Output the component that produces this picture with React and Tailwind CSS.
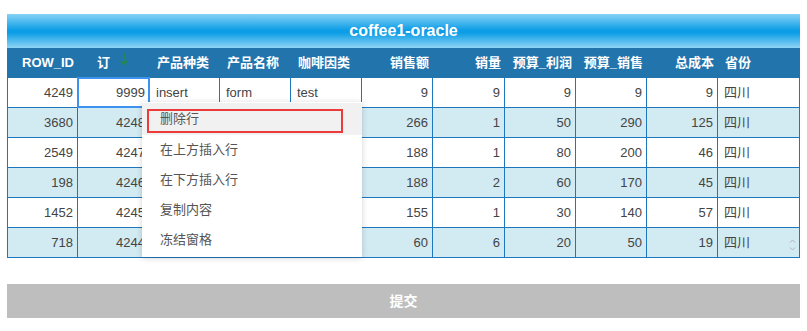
const cols = [
  { key: 'ROW_ID', w: 'w-[70px]', align: 'right' },
  { key: '订', w: 'w-[72px]', align: 'right' },
  { key: '产品种类', w: 'w-[70px]', align: 'left' },
  { key: '产品名称', w: 'w-[71px]', align: 'left' },
  { key: '咖啡因类', w: 'w-[71px]', align: 'left' },
  { key: '销售额', w: 'w-[71px]', align: 'right' },
  { key: '销量', w: 'w-[72px]', align: 'right' },
  { key: '预算_利润', w: 'w-[71px]', align: 'right' },
  { key: '预算_销售', w: 'w-[71px]', align: 'right' },
  { key: '总成本', w: 'w-[71px]', align: 'right' },
  { key: '省份', w: 'w-[82px]', align: 'left' },
]

const rows = [
  ['4249', '9999', 'insert', 'form', 'test', '9', '9', '9', '9', '9', '四川'],
  ['3680', '4248', '', '', '', '266', '1', '50', '290', '125', '四川'],
  ['2549', '4247', '', '', '', '188', '1', '80', '200', '46', '四川'],
  ['198', '4246', '', '', '', '188', '2', '60', '170', '45', '四川'],
  ['1452', '4245', '', '', '', '155', '1', '30', '140', '57', '四川'],
  ['718', '4244', '', '', '', '60', '6', '20', '50', '19', '四川'],
]

const menuItems = ['删除行', '在上方插入行', '在下方插入行', '复制内容', '冻结窗格']

const font = { fontFamily: '"Liberation Sans", "Noto Sans CJK SC", sans-serif' }

export default function App() {
  return (
    <div className="bg-white w-[807px] h-[331px] pt-[14px] pl-[7px] relative" style={font}>
      <div className="w-[793px]">
        {/* title */}
        <div className="h-[34px] flex items-center justify-center bg-[linear-gradient(to_bottom,#86d2f5_0%,#0b9de6_48%,#0b9de6_55%,#8fd5f5_100%)]">
          <span className="text-white font-bold text-[16px]">coffee1-oracle</span>
        </div>

        {/* header */}
        <div className="h-[30px] flex bg-[#2274ad] text-white font-bold text-[13px]">
          <div className="w-[1px]" />
          {cols.map((c, i) =>
            i === 1 ? (
              <div key={c.key} className={`${c.w} flex items-center pl-[19px]`}>
                <span>订</span>
                <svg className="ml-[10px] -mt-[8px]" width="8" height="13" viewBox="0 0 8 13">
                  <path d="M4 0 V11.5 M1 8 L4 11.5 L7 8" stroke="#238a4c" strokeWidth="1.6" fill="none" />
                </svg>
              </div>
            ) : (
              <div
                key={c.key}
                className={`${c.w} flex items-center ${c.align === 'right' ? 'justify-end pr-[4px]' : 'pl-[7px]'}`}
              >
                {c.key}
              </div>
            )
          )}
        </div>

        {/* body */}
        <div className="border-l border-[#1e76bc] text-[13px] text-[#444]">
          {rows.map((r, ri) => (
            <div key={ri} className={`h-[30px] flex border-b border-[#1e76bc] ${ri % 2 === 1 ? 'bg-[#d2eaf2]' : 'bg-white'}`}>
              {r.map((v, ci) => (
                <div
                  key={ci}
                  className={`${cols[ci].w} relative h-full border-r border-[#1e76bc] flex items-center ${cols[ci].align === 'right' ? 'justify-end pr-[4px]' : 'pl-[6px]'}`}
                >
                  {v}
                  {ri === 0 && ci === 1 && (
                    <div className="absolute -left-[1px] -top-[1px] -right-[1px] -bottom-[1px] border-2 border-[#3d92f0]" />
                  )}
                  {ri === 5 && ci === 10 && (
                    <svg className="absolute right-[3px] top-[10px]" width="7" height="14" viewBox="0 0 7 14">
                      <path d="M1 4.5 L3.5 2 L6 4.5 M1 9.5 L3.5 12 L6 9.5" stroke="#b5b5b5" strokeWidth="1" fill="none" />
                    </svg>
                  )}
                </div>
              ))}
            </div>
          ))}
        </div>

        {/* submit */}
        <button className="mt-[26px] w-[793px] h-[34px] bg-[#bebebe] text-white text-[14px] font-bold flex items-center justify-center">
          提交
        </button>
      </div>

      {/* context menu */}
      <div className="absolute left-[142px] top-[102px] w-[220px] h-[155px] bg-white shadow-[0_1px_6px_rgba(0,0,0,0.18)] pt-[1px] text-[13px] text-[#555]">
        {menuItems.map((m, i) => (
          <div key={m} className={`relative h-[30px] flex items-center pl-[18px] ${i === 0 ? 'bg-[#f1f1f1] h-[32px]' : ''}`}>
            {m}
            {i === 0 && (
              <div className="absolute left-[5px] top-[6px] w-[196px] h-[24px] border-2 border-[#ec3b3b]" />
            )}
          </div>
        ))}
      </div>
    </div>
  )
}
